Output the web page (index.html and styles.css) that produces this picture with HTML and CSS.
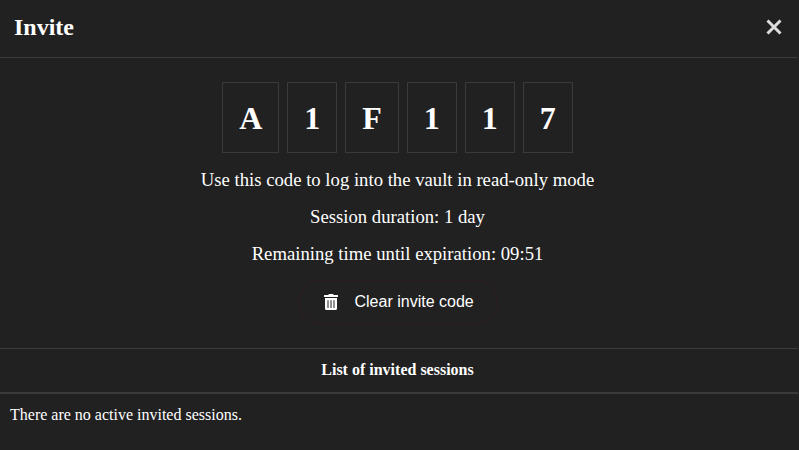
FILE: index.html
```html
<!DOCTYPE html>
<html lang="en">
<head>
<meta charset="utf-8">
<title>Invite</title>
<link rel="stylesheet" href="styles.css">
</head>
<body>
<main class="modal">
  <header class="modal-header">
    <h1 class="modal-title">Invite</h1>
    <button class="close" aria-label="Close"><svg width="16" height="16" viewBox="0 0 16 16"><path d="M1.5 1.5l13 13M14.5 1.5l-13 13"/></svg></button>
  </header>
  <section class="invite">
    <div class="code"><span>A</span><span>1</span><span>F</span><span>1</span><span>1</span><span>7</span></div>
    <p class="info">Use this code to log into the vault in read-only mode</p>
    <p class="info">Session duration: 1 day</p>
    <p class="info">Remaining time until expiration: 09:51</p>
    <button class="clear"><svg width="14" height="16" viewBox="0 0 448 512"><path fill-rule="evenodd" d="M32 464a48 48 0 0 0 48 48h288a48 48 0 0 0 48-48V128H32zm272-256a16 16 0 0 1 32 0v224a16 16 0 0 1-32 0zm-96 0a16 16 0 0 1 32 0v224a16 16 0 0 1-32 0zm-96 0a16 16 0 0 1 32 0v224a16 16 0 0 1-32 0zM432 32H312l-9-19A24 24 0 0 0 281 0H167a24 24 0 0 0-22 13l-9 19H16A16 16 0 0 0 0 48v32a16 16 0 0 0 16 16h416a16 16 0 0 0 16-16V48a16 16 0 0 0-16-16z"/></svg>Clear invite code</button>
  </section>
  <table class="sessions">
    <thead><tr><th>List of invited sessions</th></tr></thead>
    <tbody><tr><td>There are no active invited sessions.</td></tr></tbody>
  </table>
</main>
</body>
</html>
```

FILE: styles.css
```css
* { box-sizing: border-box; }
body { margin: 0; background: #212121; color: #fff; font-family: "Liberation Serif", serif; overflow: hidden; }
.modal { width: 799px; height: 450px; padding-right: 1px; }
.modal-header { display: flex; align-items: center; justify-content: space-between; height: 58px; padding: 0 16px 3px 14px; border-bottom: 1px solid #3a3a3a; }
.modal-title { margin: 0; font-size: 24px; line-height: 28px; }
.close { display: flex; padding: 0; border: 0; background: none; }
.close svg { stroke: #ddd; stroke-width: 3; fill: none; }
.invite { display: flex; flex-direction: column; align-items: center; height: 290px; padding: 24px 3px 0 0; }
.code { display: flex; gap: 8px; margin-bottom: 16px; }
.code span { height: 71px; padding: 17px 16px; border: 1px solid #3a3a3a; font-size: 32px; line-height: 36px; font-weight: bold; }
.info { margin: 0 0 16px; font-size: 18.7px; line-height: 21px; }
.clear { display: flex; align-items: center; width: 200px; height: 44px; padding: 0 0 0 25px; border: 1px solid #2d1c1c; border-radius: 22px; background: none; color: #fff; font: 16px "Liberation Sans", sans-serif; gap: 17px; }
.clear svg { fill: #fff; }
.sessions { width: 100%; border-collapse: collapse; font-size: 16px; line-height: 18px; }
.sessions th { height: 44px; padding: 0 3px 0 0; border-top: 1px solid #3a3a3a; border-bottom: 2px solid #3a3a3a; font-size: 16px; }
.sessions td { height: 44px; padding: 0 10px; }
```
